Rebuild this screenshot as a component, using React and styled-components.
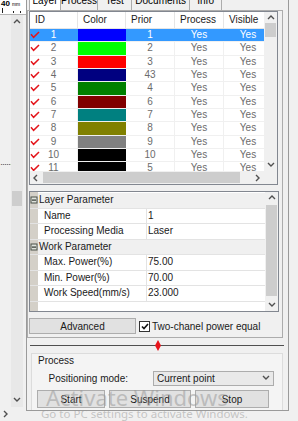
import styled, { createGlobalStyle } from "styled-components";

const GlobalStyle = createGlobalStyle`
  html, body {
    margin: 0;
    padding: 0;
  }
  body {
    background: #f0f0f0;
    font-family: "Liberation Sans", Arial, sans-serif;
    font-size: 10px;
    color: #000;
  }
`;

const Screen = styled.div`
  position: relative;
  width: 298px;
  height: 421px;
  display: flex;
  overflow: hidden;
  background: #f0f0f0;
`;

/* ---------- left canvas strip ---------- */

const LeftStrip = styled.div`
  width: 26px;
  display: flex;
  flex-direction: column;
`;

const Ruler = styled.div`
  height: 14px;
  background: #fff;
  border-bottom: 1px solid #b5b5b5;
  display: flex;
  flex-direction: column;
`;

const RulerText = styled.div`
  display: flex;
  align-items: baseline;
  gap: 2px;
  height: 8px;
  line-height: 8px;
  padding-left: 1px;
  font-size: 8px;
  b {
    font-weight: bold;
  }
  span {
    font-size: 5px;
  }
`;

const StripBody = styled.div`
  flex: 1;
  display: flex;
`;

const DotsCol = styled.div`
  width: 11px;
  padding-top: 144px;
  font-size: 9px;
  letter-spacing: -1px;
  color: #444;
`;

const StripTrack = styled.div`
  width: 12px;
  display: flex;
  flex-direction: column;
  background: #e8e8e8;
`;

const StripFoot = styled.div`
  height: 14px;
  display: flex;
  align-items: center;
  padding-left: 2px;
`;

/* ---------- scrollbars ---------- */

const VTrack = styled.div`
  display: flex;
  flex-direction: column;
  background: #f0f0f0;
`;

const HTrack = styled.div`
  display: flex;
  background: #f0f0f0;
`;

const ArrowCell = styled.div`
  flex: 0 0 ${(p) => p.$size || 12}px;
  height: ${(p) => (p.$h ? `${p.$size || 12}px` : "auto")};
  display: flex;
  align-items: center;
  justify-content: center;
`;

const VThumb = styled.div`
  margin-top: ${(p) => p.$top}px;
  height: ${(p) => p.$len}px;
  margin-left: 1px;
  margin-right: 1px;
  background: #cdcdcd;
`;

const HThumb = styled.div`
  margin-left: ${(p) => p.$start}px;
  width: ${(p) => p.$len}px;
  margin-top: 1px;
  margin-bottom: 1px;
  background: #cdcdcd;
`;

const Spacer = styled.div`
  flex: 1;
`;

function Chevron({ dir }) {
  const d = {
    up: "M1 5 L4 2 L7 5",
    down: "M1 2 L4 5 L7 2",
    left: "M5 1 L2 4 L5 7",
    right: "M2 1 L5 4 L2 7",
  }[dir];
  return (
    <svg width="8" height="8" viewBox="0 0 8 8">
      <path d={d} fill="none" stroke="#505050" strokeWidth="1.4" />
    </svg>
  );
}

/* ---------- main panel ---------- */

const MainPanel = styled.div`
  width: 263px;
  height: 411px;
  box-sizing: border-box;
  border-left: 1px solid #9a9a9a;
  border-right: 1px solid #9a9a9a;
  border-bottom: 1px solid #9a9a9a;
  display: flex;
  flex-direction: column;
  overflow: hidden;
`;

const TabStrip = styled.div`
  height: 10px;
  display: flex;
  align-items: flex-end;
  padding-left: 2px;
`;

const Tab = styled.div`
  flex: 0 0 ${(p) => p.$w}px;
  height: 18px;
  box-sizing: border-box;
  border: 1px solid #acacac;
  border-bottom: none;
  margin-right: -1px;
  background: ${(p) => (p.$active ? "#fff" : "#f0f0f0")};
  text-align: center;
  line-height: 15px;
`;

const TabPage = styled.div`
  height: 328px;
  margin-right: 5px;
  box-sizing: border-box;
  border: 1px solid #acacac;
  padding-left: 1px;
  display: flex;
  flex-direction: column;
`;

/* ---------- layer table ---------- */

const COLS = "48px 48px 49px 49px 49px";

const LayerFrame = styled.div`
  width: 249px;
  height: 174px;
  box-sizing: border-box;
  border: 1px solid #828790;
  background: #fff;
  display: grid;
  grid-template-columns: 1fr 13px;
  grid-template-rows: 1fr 13px;
`;

const TableView = styled.div`
  overflow: hidden;
`;

const HeaderRow = styled.div`
  display: grid;
  grid-template-columns: ${COLS};
  height: 17px;
  border-bottom: 1px solid #e5e5e5;
  box-sizing: border-box;
`;

const HeaderCell = styled.div`
  padding-left: 5px;
  line-height: 16px;
  border-right: 1px solid #e5e5e5;
  white-space: nowrap;
  color: #1a1a1a;
`;

const Row = styled.div`
  display: grid;
  grid-template-columns: ${COLS};
  height: 13.33px;
  box-sizing: border-box;
  border-bottom: 1px solid #f0f0f0;
  color: ${(p) => (p.$selected ? "#fff" : "#6b6b6b")};
`;

const Cell = styled.div`
  line-height: 12px;
  text-align: center;
  white-space: nowrap;
  background: ${(p) => (p.$selected ? "#3399ff" : "transparent")};
  border-right: 1px solid ${(p) => (p.$selected ? "#3399ff" : "#f0f0f0")};
`;

const IdCell = styled(Cell)`
  display: grid;
  grid-template-columns: 12px 1fr 12px;
  align-items: center;
`;

const Swatch = styled.div`
  background: ${(p) => p.$color};
`;

const Corner = styled.div`
  background: #f0f0f0;
`;

function Check() {
  return (
    <svg width="10" height="8" viewBox="0 0 10 8">
      <path d="M1 3.2 L3.6 6.4 L9 1" fill="none" stroke="#e4151b" strokeWidth="1.5" />
    </svg>
  );
}

const layers = [
  { id: 1, color: "#0000ff", prior: 1 },
  { id: 2, color: "#00ff00", prior: 2 },
  { id: 3, color: "#ff0000", prior: 3 },
  { id: 4, color: "#000080", prior: 43 },
  { id: 5, color: "#008000", prior: 4 },
  { id: 6, color: "#800000", prior: 6 },
  { id: 7, color: "#008080", prior: 7 },
  { id: 8, color: "#808000", prior: 8 },
  { id: 9, color: "#808080", prior: 9 },
  { id: 10, color: "#000000", prior: 10 },
  { id: 11, color: "#000000", prior: 5 },
];

/* ---------- property grid ---------- */

const PropFrame = styled.div`
  margin-top: 6px;
  width: 250px;
  height: 121px;
  box-sizing: border-box;
  border: 1px solid #828790;
  display: grid;
  grid-template-columns: 1fr 13px;
`;

const PropBody = styled.div`
  padding-top: 1px;
  background: linear-gradient(to right, #d4d0c8 8px, #fff 8px);
`;

const PropRow = styled.div`
  display: grid;
  grid-template-columns: 8px ${(p) => (p.$category ? "1fr" : "109px 1fr")};
  height: 15.5px;
  box-sizing: border-box;
  line-height: 14px;
  border-bottom: 1px solid #e3e3e3;
`;

const GutterCell = styled.div`
  display: flex;
  align-items: center;
  justify-content: center;
`;

const CategoryName = styled.div`
  background: #f0f0f0;
  padding-left: 1px;
  color: #1a1a1a;
`;

const PropName = styled.div`
  padding-left: 6px;
  border-right: 1px solid #e3e3e3;
  color: #1a1a1a;
`;

const PropValue = styled.div`
  padding-left: 1px;
  color: #1a1a1a;
`;

function Collapse() {
  return (
    <svg width="8" height="8" viewBox="0 0 8 8">
      <rect x="0.5" y="0.5" width="7" height="7" fill="#4a5148" />
      <rect x="1.5" y="1.5" width="5" height="5" fill="#dfe3dc" />
      <rect x="2" y="3.5" width="4" height="1.2" fill="#2f352e" />
    </svg>
  );
}

const params = [
  {
    title: "Layer Parameter",
    items: [
      ["Name", "1"],
      ["Processing Media", "Laser"],
    ],
  },
  {
    title: "Work Parameter",
    items: [
      ["Max. Power(%)", "75.00"],
      ["Min. Power(%)", "70.00"],
      ["Work Speed(mm/s)", "23.000"],
    ],
  },
];

/* ---------- buttons / controls ---------- */

const AdvancedRow = styled.div`
  margin-top: 6px;
  height: 16px;
  display: flex;
  align-items: center;
`;

const Button = styled.button`
  width: ${(p) => p.$w}px;
  height: ${(p) => p.$h || 16}px;
  padding: 0;
  border: 1px solid #adadad;
  background: #e1e1e1;
  font: inherit;
  color: #1a1a1a;
`;

const CheckBox = styled.span`
  margin-left: 3px;
  width: 11px;
  height: 11px;
  box-sizing: border-box;
  border: 1px solid #333;
  background: #fff;
  display: flex;
  align-items: center;
  justify-content: center;
`;

const CheckLabel = styled.span`
  margin-left: 2px;
  color: #1a1a1a;
`;

const SliderRow = styled.div`
  height: 14px;
  padding: 0 4px 0 3px;
  display: flex;
  align-items: center;
`;

const SliderTrack = styled.div`
  flex: 1;
  height: 11px;
  display: flex;
  align-items: center;
  background: linear-gradient(#505050, #505050) center / 100% 1px no-repeat;
`;

const SliderThumb = styled.div`
  margin-left: 125px;
  display: flex;
`;

const GroupBox = styled.div`
  margin: 1px 5px 0 4px;
  flex: 1;
  border: 1px solid #dcdcdc;
  border-bottom: none;
  background: #f4f4f4;
  padding: 0 8px 0 5px;
  display: flex;
  flex-direction: column;
`;

const GroupTitle = styled.div`
  height: 14px;
  line-height: 14px;
  padding-left: 1px;
  color: #1a1a1a;
`;

const FieldRow = styled.div`
  margin-top: 2px;
  height: 16px;
  display: flex;
  align-items: center;
`;

const FieldLabel = styled.div`
  width: 91px;
  text-align: right;
  color: #1a1a1a;
`;

const Combo = styled.div`
  margin-left: 25px;
  flex: 1;
  height: 15px;
  box-sizing: border-box;
  border: 1px solid #acacac;
  background: #e9e9e9;
  display: flex;
  align-items: center;
  justify-content: space-between;
  padding: 0 3px 0 3px;
  color: #1a1a1a;
`;

const ButtonRow = styled.div`
  margin-top: 4px;
  display: flex;
  gap: 4px;
`;

const RightGutter = styled.div`
  flex: 1;
`;

/* ---------- watermark ---------- */

const Watermark = styled.div`
  position: absolute;
  left: ${(p) => p.$x}px;
  top: ${(p) => p.$y}px;
  font-family: "Noto Sans", "Open Sans", sans-serif;
  font-size: ${(p) => p.$size}px;
  color: rgba(150, 150, 150, 0.5);
  white-space: nowrap;
  pointer-events: none;
`;

export default function App() {
  return (
    <>
      <GlobalStyle />
      <Screen>
        <LeftStrip>
          <Ruler>
            <RulerText>
              <b>40</b>
              <span>mm</span>
            </RulerText>
            <svg width="26" height="5" viewBox="0 0 26 5">
              <path d="M2.5 0 V5 M13.5 3 V5 M20.5 3 V5" stroke="#222" strokeWidth="1" />
            </svg>
          </Ruler>
          <StripBody>
            <DotsCol>······</DotsCol>
            <StripTrack>
              <ArrowCell $h $size={14}>
                <Chevron dir="up" />
              </ArrowCell>
              <VThumb $top={162} $len={15} />
              <Spacer />
              <ArrowCell $h $size={14}>
                <Chevron dir="down" />
              </ArrowCell>
            </StripTrack>
          </StripBody>
          <StripFoot>
            <Chevron dir="right" />
          </StripFoot>
        </LeftStrip>

        <MainPanel>
          <TabStrip>
            <Tab $w={32} $active>Layer</Tab>
            <Tab $w={36}>Process</Tab>
            <Tab $w={35}>Test</Tab>
            <Tab $w={59}>Documents</Tab>
            <Tab $w={33}>Info</Tab>
          </TabStrip>

          <TabPage>
            <LayerFrame>
              <TableView>
                <HeaderRow>
                  <HeaderCell>ID</HeaderCell>
                  <HeaderCell>Color</HeaderCell>
                  <HeaderCell>Prior</HeaderCell>
                  <HeaderCell>Process</HeaderCell>
                  <HeaderCell>Visible</HeaderCell>
                </HeaderRow>
                {layers.map((l, i) => {
                  const sel = i === 0;
                  return (
                    <Row key={l.id} $selected={sel}>
                      <IdCell $selected={sel}>
                        <Check />
                        <span>{l.id}</span>
                      </IdCell>
                      <Swatch $color={l.color} />
                      <Cell $selected={sel}>{l.prior}</Cell>
                      <Cell $selected={sel}>Yes</Cell>
                      <Cell $selected={sel}>Yes</Cell>
                    </Row>
                  );
                })}
              </TableView>
              <VTrack>
                <ArrowCell $h $size={11}>
                  <Chevron dir="up" />
                </ArrowCell>
                <VThumb $top={0} $len={14} />
                <Spacer />
                <ArrowCell $h $size={12}>
                  <Chevron dir="down" />
                </ArrowCell>
              </VTrack>
              <HTrack>
                <ArrowCell $size={12}>
                  <Chevron dir="left" />
                </ArrowCell>
                <HThumb $start={1} $len={197} />
                <Spacer />
                <ArrowCell $size={12}>
                  <Chevron dir="right" />
                </ArrowCell>
              </HTrack>
              <Corner />
            </LayerFrame>

            <PropFrame>
              <PropBody>
                {params.map((g) => (
                  <div key={g.title}>
                    <PropRow $category>
                      <GutterCell>
                        <Collapse />
                      </GutterCell>
                      <CategoryName>{g.title}</CategoryName>
                    </PropRow>
                    {g.items.map(([k, v]) => (
                      <PropRow key={k}>
                        <GutterCell />
                        <PropName>{k}</PropName>
                        <PropValue>{v}</PropValue>
                      </PropRow>
                    ))}
                  </div>
                ))}
              </PropBody>
              <VTrack>
                <ArrowCell $h $size={12}>
                  <Chevron dir="up" />
                </ArrowCell>
                <VThumb $top={1} $len={91} />
                <Spacer />
                <ArrowCell $h $size={12}>
                  <Chevron dir="down" />
                </ArrowCell>
              </VTrack>
            </PropFrame>

            <AdvancedRow>
              <Button $w={107}>Advanced</Button>
              <CheckBox>
                <svg width="8" height="7" viewBox="0 0 8 7">
                  <path d="M1 3.5 L3 5.6 L7 1" fill="none" stroke="#111" strokeWidth="1.6" />
                </svg>
              </CheckBox>
              <CheckLabel>Two-chanel power equal</CheckLabel>
            </AdvancedRow>
          </TabPage>

          <SliderRow>
            <SliderTrack>
              <SliderThumb>
                <svg width="6" height="11" viewBox="0 0 6 11">
                  <path d="M3 0 L6 5.5 L3 11 L0 5.5 Z" fill="#e8141b" />
                </svg>
              </SliderThumb>
            </SliderTrack>
          </SliderRow>

          <GroupBox>
            <GroupTitle>Process</GroupTitle>
            <FieldRow>
              <FieldLabel>Positioning mode:</FieldLabel>
              <Combo>
                <span>Current point</span>
                <Chevron dir="down" />
              </Combo>
            </FieldRow>
            <ButtonRow>
              <Button $w={68} $h={18}>Start</Button>
              <Button $w={82} $h={18}>Suspend</Button>
              <Button $w={74} $h={18}>Stop</Button>
            </ButtonRow>
          </GroupBox>
        </MainPanel>
        <RightGutter />

        <Watermark $x={46} $y={382} $size={22}>
          Activate Windows
        </Watermark>
        <Watermark $x={41} $y={406} $size={11.5}>
          Go to PC settings to activate Windows.
        </Watermark>
      </Screen>
    </>
  );
}
